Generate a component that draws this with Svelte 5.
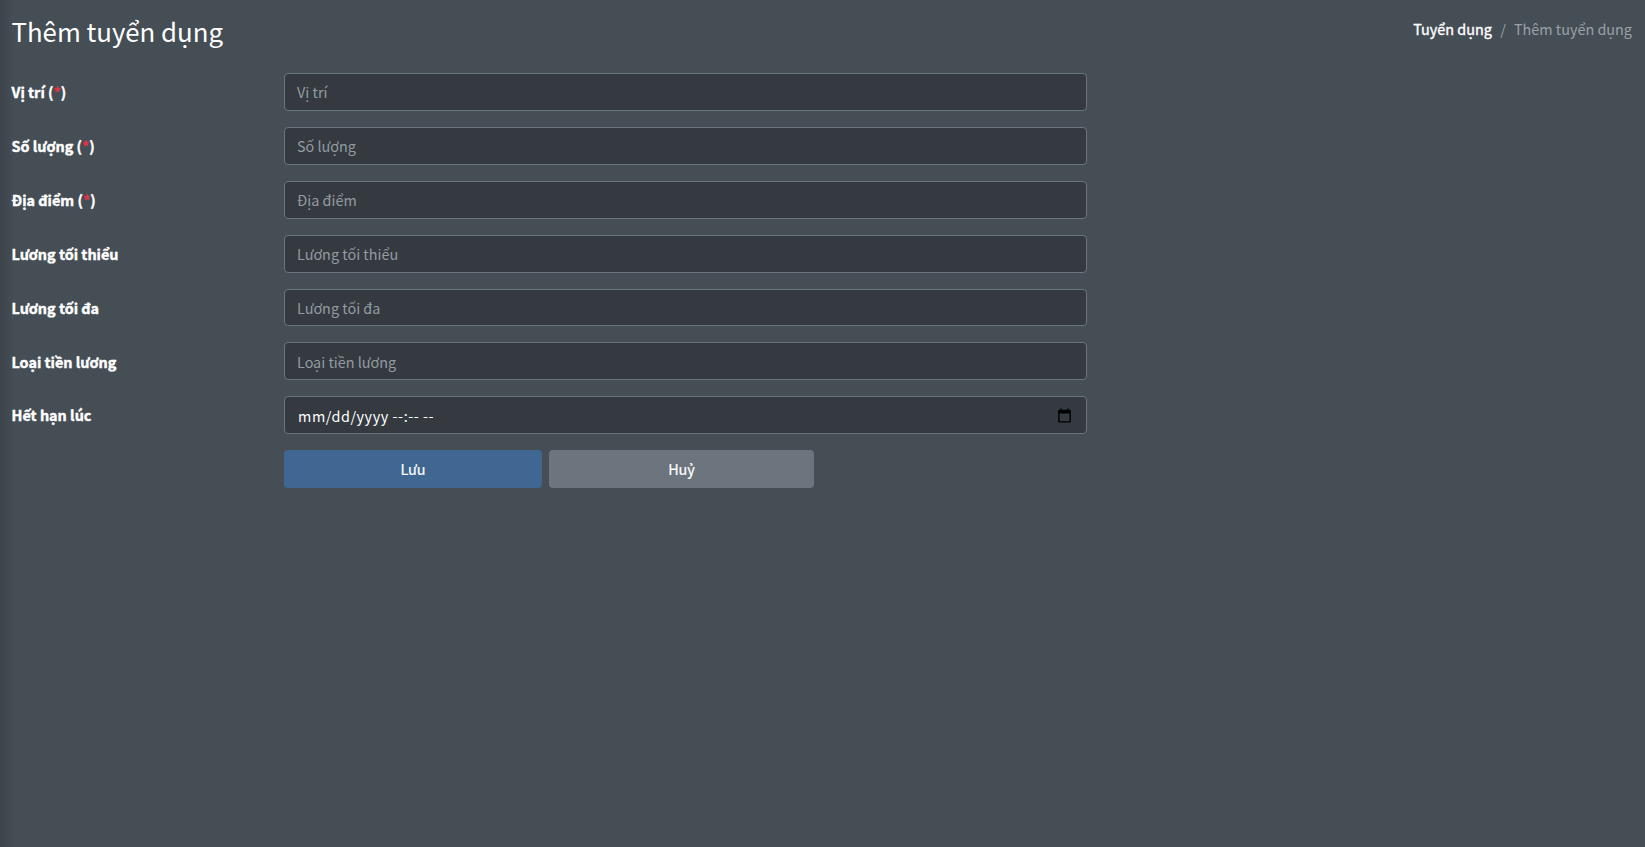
<script>
  const fields = [
    { label: 'Vị trí', required: true },
    { label: 'Số lượng', required: true },
    { label: 'Địa điểm', required: true },
    { label: 'Lương tối thiểu' },
    { label: 'Lương tối đa' },
    { label: 'Loại tiền lương' }
  ];
</script>

<div class="page">
  <header class="head">
    <h1>Thêm tuyển dụng</h1>
    <nav class="crumbs">
      <span class="link">Tuyển dụng</span>
      <span class="sep">/</span>
      <span class="cur">Thêm tuyển dụng</span>
    </nav>
  </header>
  <form class="form">
    {#each fields as f}
      <div class="row">
        <label for={f.label}>{f.label}{#if f.required}{' '}(<span class="req">*</span>){/if}</label>
        <input id={f.label} type="text" placeholder={f.label} />
      </div>
    {/each}
    <div class="row">
      <label for="exp">Hết hạn lúc</label>
      <div class="date">
        <input id="exp" type="text" value="mm/dd/yyyy --:-- --" />
        <svg class="cal" viewBox="0 0 24 24" width="17" height="17" aria-hidden="true">
          <path fill="#000" d="M19 4h-1V2h-2v2H8V2H6v2H5c-1.1 0-2 .9-2 2v14c0 1.1.9 2 2 2h14c1.1 0 2-.9 2-2V6c0-1.1-.9-2-2-2zm0 16H5V9h14v11z" />
        </svg>
      </div>
    </div>
    <div class="row">
      <span></span>
      <div class="actions">
        <button type="button" class="save">Lưu</button>
        <button type="button" class="cancel">Huỷ</button>
      </div>
    </div>
  </form>
</div>

<style>
  :global(body) {
    margin: 0;
    background: #454d55;
  }
  .page {
    box-sizing: border-box;
    min-height: 847px;
    padding: 0 13px 0 11.5px;
    color: #fff;
    font-family: "Noto Sans CJK SC", "Noto Sans", sans-serif;
    font-size: 14.4px;
    line-height: 1.5;
    background: linear-gradient(to right, #3d444b 0, #454d55 14px);
  }
  .head {
    display: flex;
    justify-content: space-between;
    align-items: flex-start;
    height: 73px;
  }
  h1 {
    margin: 11px 0 0;
    font-size: 25.8px;
    font-weight: 400;
    line-height: 40px;
  }
  .crumbs {
    display: flex;
    gap: 8px;
    margin-top: 17px;
    line-height: 24px;
  }
  .link {
    font-weight: 400;
    margin-right: 0.5px;
    -webkit-text-stroke: 0.35px #fff;
  }
  .sep, .cur { color: #9aa1a8; }
  .form {
    display: flex;
    flex-direction: column;
    gap: 16px;
    width: 1075.5px;
  }
  .row {
    display: grid;
    grid-template-columns: 272.5px 803px;
    align-items: center;
  }
  label {
    font-weight: 700;
    -webkit-text-stroke: 0.4px #fff;
  }
  .req {
    color: #dc3545;
    -webkit-text-stroke: 0.4px #dc3545;
  }
  input {
    box-sizing: border-box;
    width: 100%;
    height: 37.9px;
    padding: 6px 12px;
    border: 1px solid #6c757d;
    border-radius: 4px;
    background: #343a40;
    color: #fff;
    font: inherit;
  }
  input::placeholder { color: #939ba2; }
  #exp {
    padding-left: 13px;
    letter-spacing: 0.55px;
  }
  .date { position: relative; display: flex; }
  .cal {
    position: absolute;
    right: 14.5px;
    top: 10.5px;
  }
  .actions {
    display: flex;
    gap: 7px;
  }
  button {
    height: 37.9px;
    border: 0;
    border-radius: 4px;
    color: #fff;
    font: inherit;
    font-weight: 400;
    -webkit-text-stroke: 0.2px #fff;
  }
  .save { width: 258px; background: #3f6791; }
  .cancel { width: 265px; background: #6c757d; }
</style>
